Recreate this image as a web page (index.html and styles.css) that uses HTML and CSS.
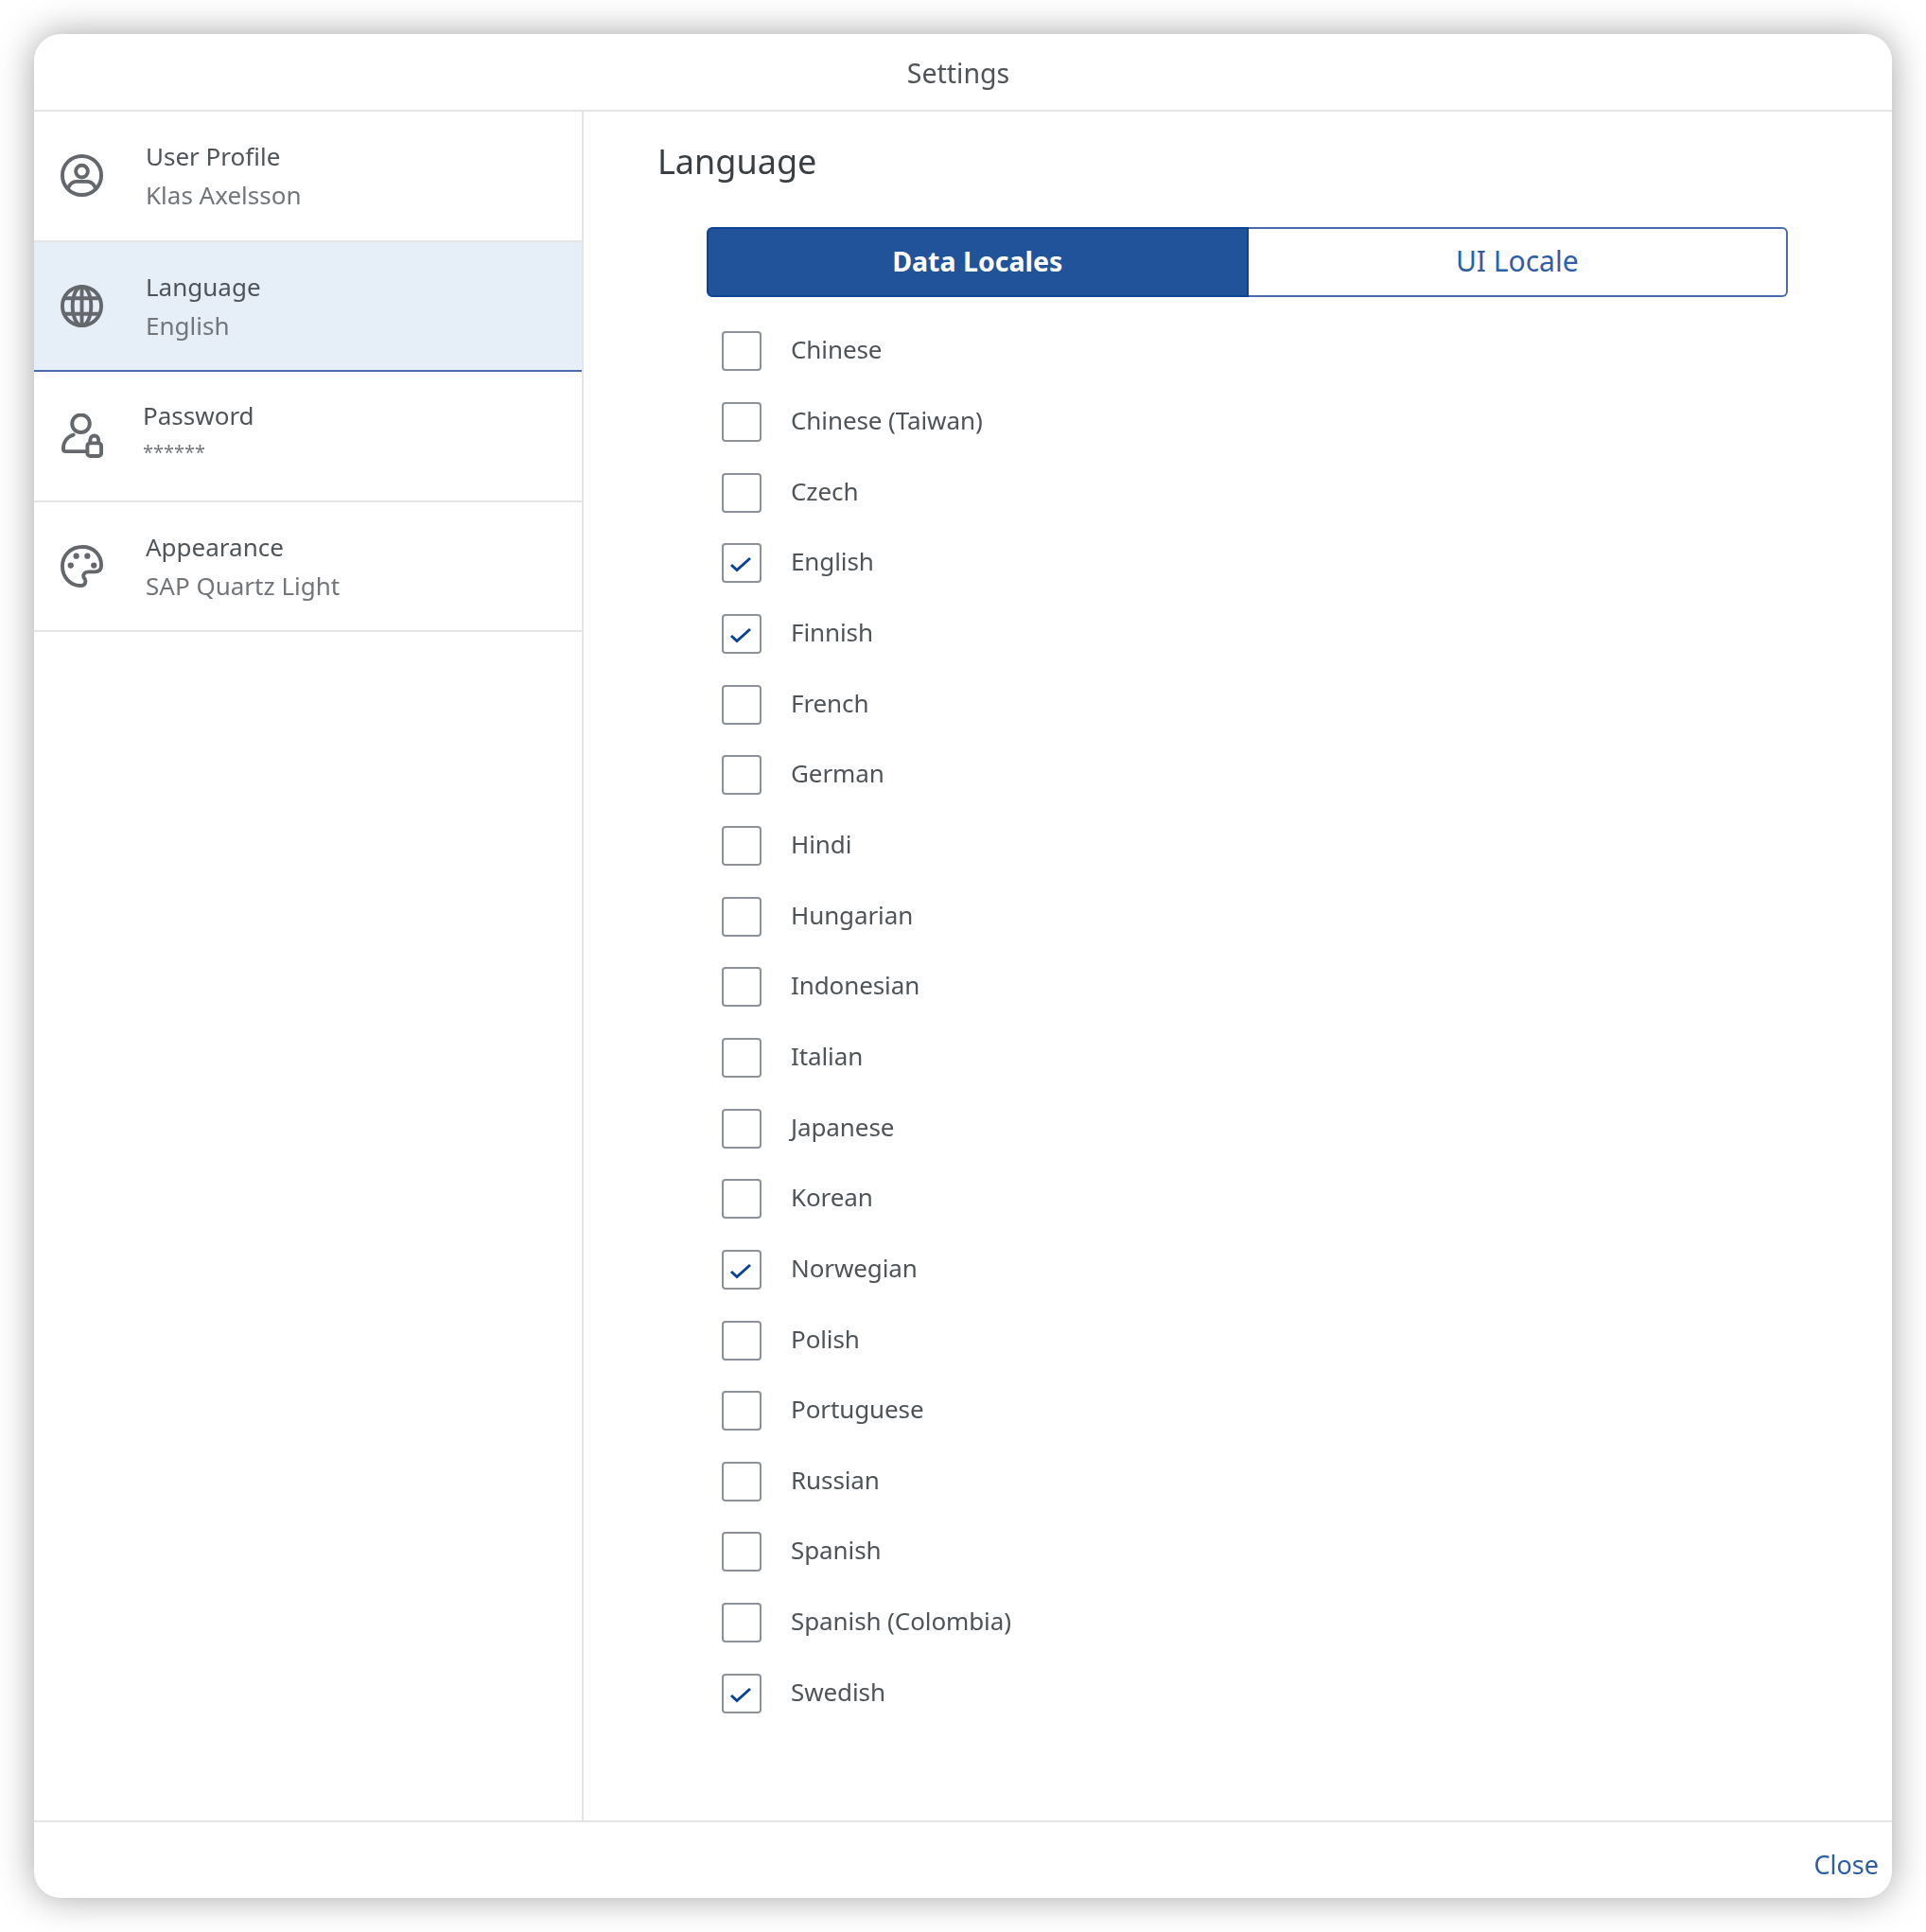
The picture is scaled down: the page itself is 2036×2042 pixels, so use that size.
FILE: index.html
```html
<!DOCTYPE html>
<html lang="en">
<head>
<meta charset="utf-8">
<title>Settings</title>
<link rel="stylesheet" href="styles.css">
</head>
<body>
<div class="dialog">
  <header class="dialog-header"><span class="dialog-title">Settings</span></header>
  <div class="dialog-body">
    <nav class="sidebar">
      <div class="nav-item">
        <svg class="nav-icon" viewBox="0 0 48 48"><circle cx="24" cy="24" r="21"/><circle cx="24" cy="19.500" r="6.500"/><path d="M9 38c2-5 5-7.500 9-7.500h12c4 0 7 2.500 9 7.500"/></svg>
        <div class="nav-text"><div class="nav-title">User Profile</div><div class="nav-sub">Klas Axelsson</div></div>
      </div>
      <div class="nav-item nav-item-active">
        <svg class="nav-icon" viewBox="0 0 48 48"><circle cx="24" cy="24" r="21"/><ellipse cx="24" cy="24" rx="10" ry="21"/><path d="M6 15.500h36M6 32.500h36M24 3v42"/></svg>
        <div class="nav-text nav-text-low"><div class="nav-title">Language</div><div class="nav-sub">English</div></div>
      </div>
      <div class="nav-item nav-item-password">
        <svg class="nav-icon" viewBox="0 0 48 48"><circle cx="23" cy="11" r="9.500"/><path d="M30 41H7c-2 0-3-1-3-3 0-7 4-13 11-15"/><rect x="30" y="32" width="15" height="14" rx="3"/><path d="M33 32v-3.500c0-6 9-6 9 0V32"/></svg>
        <div class="nav-text"><div class="nav-title">Password</div><div class="nav-sub nav-stars">******</div></div>
      </div>
      <div class="nav-item">
        <svg class="nav-icon" viewBox="0 0 48 48"><path d="M25 3C12 3 3 12 3 24c0 12 9 21 19 21 4 0 6-2 6-5 0-2-1-3-2-4-1-3 1-6 5-6h7c5 0 7-3 7-7C45 11 36 3 25 3z"/><circle class="dot" cx="12" cy="23" r="3.200"/><circle class="dot" cx="18" cy="13" r="3.200"/><circle class="dot" cx="30" cy="13" r="3.200"/><circle class="dot" cx="37" cy="23" r="3.200"/></svg>
        <div class="nav-text"><div class="nav-title">Appearance</div><div class="nav-sub">SAP Quartz Light</div></div>
      </div>
    </nav>
    <main class="content">
      <h2 class="content-title">Language</h2>
      <div class="segmented">
        <button class="segment segment-active">Data Locales</button>
        <button class="segment">UI Locale</button>
      </div>
      <ul class="locale-list">
        <li class="locale"><span class="box"></span><span class="locale-label">Chinese</span></li>
        <li class="locale"><span class="box"></span><span class="locale-label">Chinese (Taiwan)</span></li>
        <li class="locale"><span class="box"></span><span class="locale-label">Czech</span></li>
        <li class="locale"><span class="box"><svg class="check" viewBox="0 0 38 38"><path d="M8 21l6 5.500L28 14"/></svg></span><span class="locale-label">English</span></li>
        <li class="locale"><span class="box"><svg class="check" viewBox="0 0 38 38"><path d="M8 21l6 5.500L28 14"/></svg></span><span class="locale-label">Finnish</span></li>
        <li class="locale"><span class="box"></span><span class="locale-label">French</span></li>
        <li class="locale"><span class="box"></span><span class="locale-label">German</span></li>
        <li class="locale"><span class="box"></span><span class="locale-label">Hindi</span></li>
        <li class="locale"><span class="box"></span><span class="locale-label">Hungarian</span></li>
        <li class="locale"><span class="box"></span><span class="locale-label">Indonesian</span></li>
        <li class="locale"><span class="box"></span><span class="locale-label">Italian</span></li>
        <li class="locale"><span class="box"></span><span class="locale-label">Japanese</span></li>
        <li class="locale"><span class="box"></span><span class="locale-label">Korean</span></li>
        <li class="locale"><span class="box"><svg class="check" viewBox="0 0 38 38"><path d="M8 21l6 5.500L28 14"/></svg></span><span class="locale-label">Norwegian</span></li>
        <li class="locale"><span class="box"></span><span class="locale-label">Polish</span></li>
        <li class="locale"><span class="box"></span><span class="locale-label">Portuguese</span></li>
        <li class="locale"><span class="box"></span><span class="locale-label">Russian</span></li>
        <li class="locale"><span class="box"></span><span class="locale-label">Spanish</span></li>
        <li class="locale"><span class="box"></span><span class="locale-label">Spanish (Colombia)</span></li>
        <li class="locale"><span class="box"><svg class="check" viewBox="0 0 38 38"><path d="M8 21l6 5.500L28 14"/></svg></span><span class="locale-label">Swedish</span></li>
      </ul>
    </main>
  </div>
  <footer class="dialog-footer"><span class="close-link">Close</span></footer>
</div>
</body>
</html>
```

FILE: styles.css
```css
* { box-sizing: border-box; }
html, body { margin: 0; height: 100%; background: #fff; }
body {
  padding: 36px;
  font-family: "Noto Sans", "Open Sans", sans-serif;
  color: #4f5458;
}
.dialog {
  width: 1964px;
  height: 1970px;
  background: #fff;
  border-radius: 28px;
  box-shadow: 0 0 38px rgba(0, 0, 0, .36);
  display: flex;
  flex-direction: column;
  overflow: hidden;
}
.dialog-header {
  height: 82px;
  flex: none;
  border-bottom: 2px solid #e5e5e5;
  display: flex;
  align-items: center;
  justify-content: center;
  padding: 2px 10px 0 0;
}
.dialog-title { font-size: 28.500px; color: #4f5458; filter: blur(.5px); }
.dialog-body { flex: 1; min-height: 0; display: flex; }
.sidebar { width: 581px; flex: none; border-right: 2px solid #e5e5e5; }
.nav-item {
  height: 137.600px;
  border-bottom: 2px solid #e5e5e5;
  display: flex;
  align-items: center;
  padding-left: 27px;
  gap: 44px;
}
.nav-item-active { background: #e6eef8; border-bottom-color: #4a6cae; }
.nav-icon {
  width: 47px;
  height: 47px;
  flex: none;
  fill: none;
  stroke: #64686c;
  stroke-width: 4;
  stroke-linecap: round;
  stroke-linejoin: round;
  filter: blur(.5px);
}
.nav-icon .dot { fill: #64686c; stroke: none; }
.nav-text { filter: blur(.5px); }
.nav-text-low { margin-top: 2px; }
.nav-item-password .nav-text { margin-left: -3px; margin-top: -8px; }
.nav-title { font-size: 26px; line-height: 40px; color: #4f5458; position: relative; top: -1px; }
.nav-sub { font-size: 26px; line-height: 40px; color: #72767a; }
.nav-stars { font-size: 20px; line-height: 32px; margin-top: 2px; }
.content { flex: 1; min-width: 0; padding: 0 84px 0 78px; }
.content-title {
  margin: 27px 0 0;
  font-size: 36px;
  line-height: 52px;
  font-weight: 400;
  color: #3a3f44;
  filter: blur(.5px);
}
.segmented {
  margin: 43px 0 0 52px;
  height: 74px;
  width: 1143px;
  display: flex;
}
.segment {
  flex: 1;
  height: 100%;
  margin: 0;
  padding: 0 0 3px;
  font-family: inherit;
  font-size: 30px;
  color: #2f5ea5;
  background: #fff;
  border: 2px solid #4a6cae;
  border-left: 0;
  border-radius: 0 6px 6px 0;
}
.segment-active {
  color: #fff;
  font-size: 28.500px;
  font-weight: 700;
  background: #20539a;
  border: 2px solid #0d4395;
  border-radius: 6px 0 0 6px;
}
.locale-list { list-style: none; margin: 20px 0 0 68px; padding: 0; }
.locale { height: 74.660px; display: flex; align-items: center; }
.box {
  width: 42px;
  height: 42px;
  flex: none;
  border: 2px solid #8b9299;
  border-radius: 4px;
  background: #fff;
}
.check {
  display: block;
  width: 38px;
  height: 38px;
  fill: none;
  stroke: #0d4395;
  stroke-width: 3;
  filter: blur(.3px);
}
.locale-label {
  margin-left: 31px;
  font-size: 26px;
  letter-spacing: -.1px;
  color: #4f5458;
  position: relative;
  top: -2px;
  filter: blur(.5px);
}
.dialog-footer {
  height: 82px;
  flex: none;
  border-top: 2px solid #e5e5e5;
  display: flex;
  align-items: flex-end;
  justify-content: flex-end;
  padding: 0 14px 15px 0;
}
.close-link { font-size: 27px; line-height: 40px; color: #2f5ea5; filter: blur(.5px); }
```
